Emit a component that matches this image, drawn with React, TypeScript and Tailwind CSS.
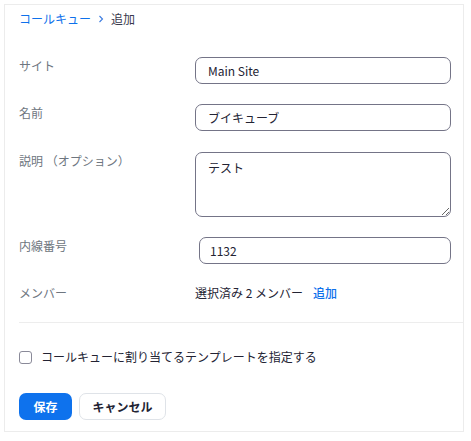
import { useState } from 'react';

const font = { fontFamily: '"Noto Sans CJK JP", "Noto Sans", sans-serif' };

const Row = ({ label, children, className = '' }: { label: string; children: React.ReactNode; className?: string }) => (
  <div className={`flex items-start ${className}`}>
    <div className="w-[176px] shrink-0 text-[12px] leading-[18px] text-[#6e7680]">{label}</div>
    {children}
  </div>
);

const inputCls =
  'h-[27px] rounded-[7px] border border-[#747487] bg-white text-[12px] text-[#232333] outline-none';

export default function App() {
  const [site, setSite] = useState('Main Site');
  const [name, setName] = useState('ブイキューブ');
  const [desc, setDesc] = useState('テスト');
  const [ext, setExt] = useState('1132');
  const [useTemplate, setUseTemplate] = useState(false);

  return (
    <div className="p-1" style={font}>
      <div className="h-[428px] w-[460px] border border-[#ececec] bg-white pl-[14px] pt-1">
        {/* breadcrumb */}
        <div className="flex h-5 items-center text-[12px] leading-5">
          <span className="text-[#0e71eb]">コールキュー</span>
          <svg className="ml-[7px] mr-[7px]" width="6" height="8" viewBox="0 0 6 8">
            <path d="M1.5 1 L4.5 4 L1.5 7" fill="none" stroke="#3b7be0" strokeWidth="1.1" />
          </svg>
          <span className="text-[#39394d]">追加</span>
        </div>

        <Row label="サイト" className="mt-[28px]">
          <input className={`${inputCls} w-[256px] px-3`} value={site} onChange={(e) => setSite(e.target.value)} />
        </Row>
        <Row label="名前" className="mt-5">
          <input className={`${inputCls} w-[256px] px-3`} value={name} onChange={(e) => setName(e.target.value)} />
        </Row>
        <Row label="説明 （オプション）" className="mt-[21px]">
          <textarea
            className="h-[65px] w-[256px] rounded-[7px] border border-[#747487] bg-white px-3 py-[6px] text-[12px] leading-[18px] text-[#232333] outline-none"
            value={desc}
            onChange={(e) => setDesc(e.target.value)}
          />
        </Row>
        <Row label="内線番号" className="mt-5">
          <input className={`${inputCls} ml-1 w-[252px] px-[10px]`} value={ext} onChange={(e) => setExt(e.target.value)} />
        </Row>
        <Row label="メンバー" className="mt-5">
          <div className="flex text-[12px] leading-[18px]">
            <span className="text-[#232333]">選択済み 2 メンバー</span>
            <span className="ml-[10px] font-medium text-[#0e71eb]">追加</span>
          </div>
        </Row>

        <div className="mt-5 h-px bg-[#ededed]" />

        <label className="mt-[25px] flex h-[18px] items-center text-[12px] text-[#232333]">
          <input
            type="checkbox"
            checked={useTemplate}
            onChange={(e) => setUseTemplate(e.target.checked)}
            className="h-[13px] w-[13px] appearance-none rounded-[3px] border border-[#8a8a99] bg-white"
          />
          <span className="ml-[9px]">コールキューに割り当てるテンプレートを指定する</span>
        </label>

        <div className="mt-[27px] flex gap-[7px]">
          <button className="h-[27px] w-[53px] rounded-[7px] bg-[#0e72ed] text-[12px] font-bold text-white">保存</button>
          <button className="h-[27px] w-[87px] rounded-[7px] border border-[#dfe3e8] bg-white text-[12px] font-bold text-[#232333]">
            キャンセル
          </button>
        </div>
      </div>
    </div>
  );
}
